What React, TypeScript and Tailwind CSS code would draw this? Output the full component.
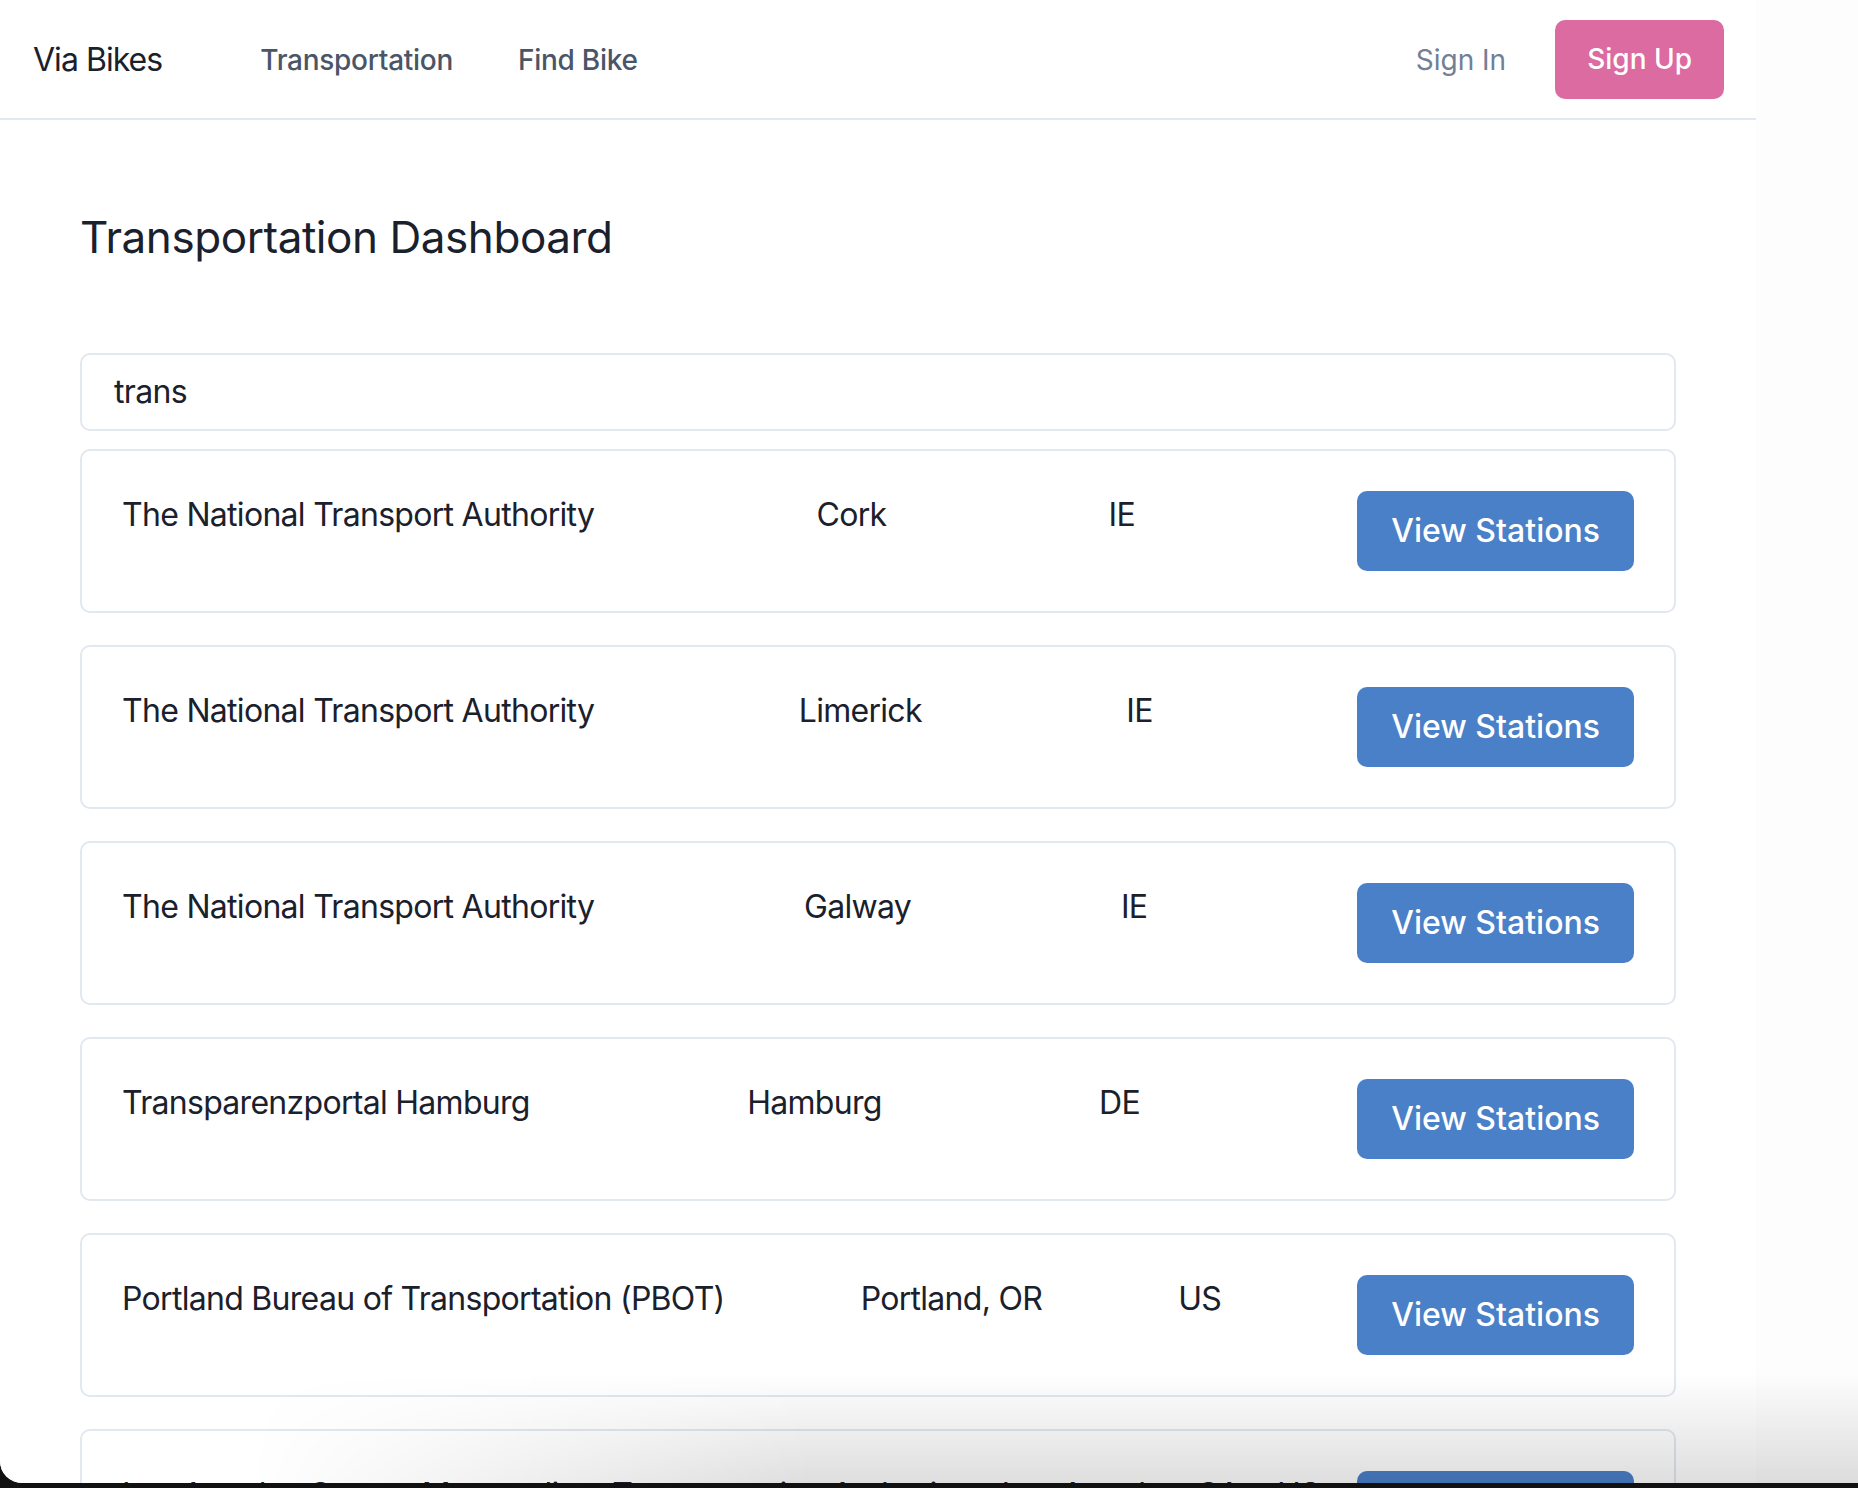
import React from "react";

type Row = { name: string; city: string; country: string };

const rows: Row[] = [
  { name: "The National Transport Authority", city: "Cork", country: "IE" },
  { name: "The National Transport Authority", city: "Limerick", country: "IE" },
  { name: "The National Transport Authority", city: "Galway", country: "IE" },
  { name: "Transparenzportal Hamburg", city: "Hamburg", country: "DE" },
  { name: "Portland Bureau of Transportation (PBOT)", city: "Portland, OR", country: "US" },
  { name: "Los Angeles County Metropolitan Transportation Authority", city: "Los Angeles, CA", country: "US" },
];

function Card({ row }: { row: Row }) {
  return (
    <div className="flex items-start justify-between rounded-[10px] border-2 border-[#e2e8f0] bg-white p-10">
      <span className="text-[32px] leading-[48px] tracking-[-0.022em] text-[#1a202c]">{row.name}</span>
      <span className="text-[32px] leading-[48px] tracking-[-0.022em] text-[#1a202c]">{row.city}</span>
      <span className="text-[32px] leading-[48px] tracking-[-0.022em] text-[#1a202c]">{row.country}</span>
      <button className="h-[80px] rounded-[10px] bg-[#4a80c8] px-[34px] text-[32px] font-medium leading-[48px] text-white">
        View Stations
      </button>
    </div>
  );
}

export default function App() {
  return (
    <div className="relative h-[1488px] w-full overflow-hidden bg-[#111111] font-[Inter,sans-serif]">
      <div className="h-[1483px] overflow-hidden rounded-bl-[22px] bg-[#fdfdfd]">
        <div className="min-h-full w-[1756px] bg-white">
          <header className="flex h-[120px] items-center border-b-2 border-[#e2e8f0] pl-[33px] pr-[32px] pt-[2px]">
            <span className="text-[32px] tracking-[-0.03em] text-[#1a202c]">Via Bikes</span>
            <nav className="ml-[98px] flex items-center gap-[65px] text-[28px] font-medium tracking-[-0.01em] text-[#4a5568]">
              <span>Transportation</span>
              <span>Find Bike</span>
            </nav>
            <div className="ml-auto flex items-center gap-[49px]">
              <span className="text-[28px] text-[#718096]">Sign In</span>
              <button className="-mt-[2px] h-[79px] rounded-[10px] bg-[#dc6ba1] px-8 text-[28px] font-medium text-white">
                Sign Up
              </button>
            </div>
          </header>
          <main className="px-20 pt-[91px]">
            <h1 className="text-[44px] font-normal leading-[53px] tracking-[-0.01em] text-[#1a202c]">
              Transportation Dashboard
            </h1>
            <div className="mt-[89px] flex h-[78px] items-center rounded-[10px] border-2 border-[#e2e8f0] px-8 text-[32px] tracking-[-0.02em] text-[#1a202c]">
              trans
            </div>
            <div className="mt-[18px] flex flex-col gap-8">
              {rows.map((r, i) => (
                <Card key={i} row={r} />
              ))}
            </div>
          </main>
        </div>
      </div>
      <div className="pointer-events-none absolute bottom-[5px] left-[250px] right-0 h-[110px] bg-[linear-gradient(to_bottom,rgba(0,0,0,0)_0%,rgba(0,0,0,0.13)_100%)] [mask-image:linear-gradient(to_right,transparent_0%,black_35%)]" />
    </div>
  );
}
